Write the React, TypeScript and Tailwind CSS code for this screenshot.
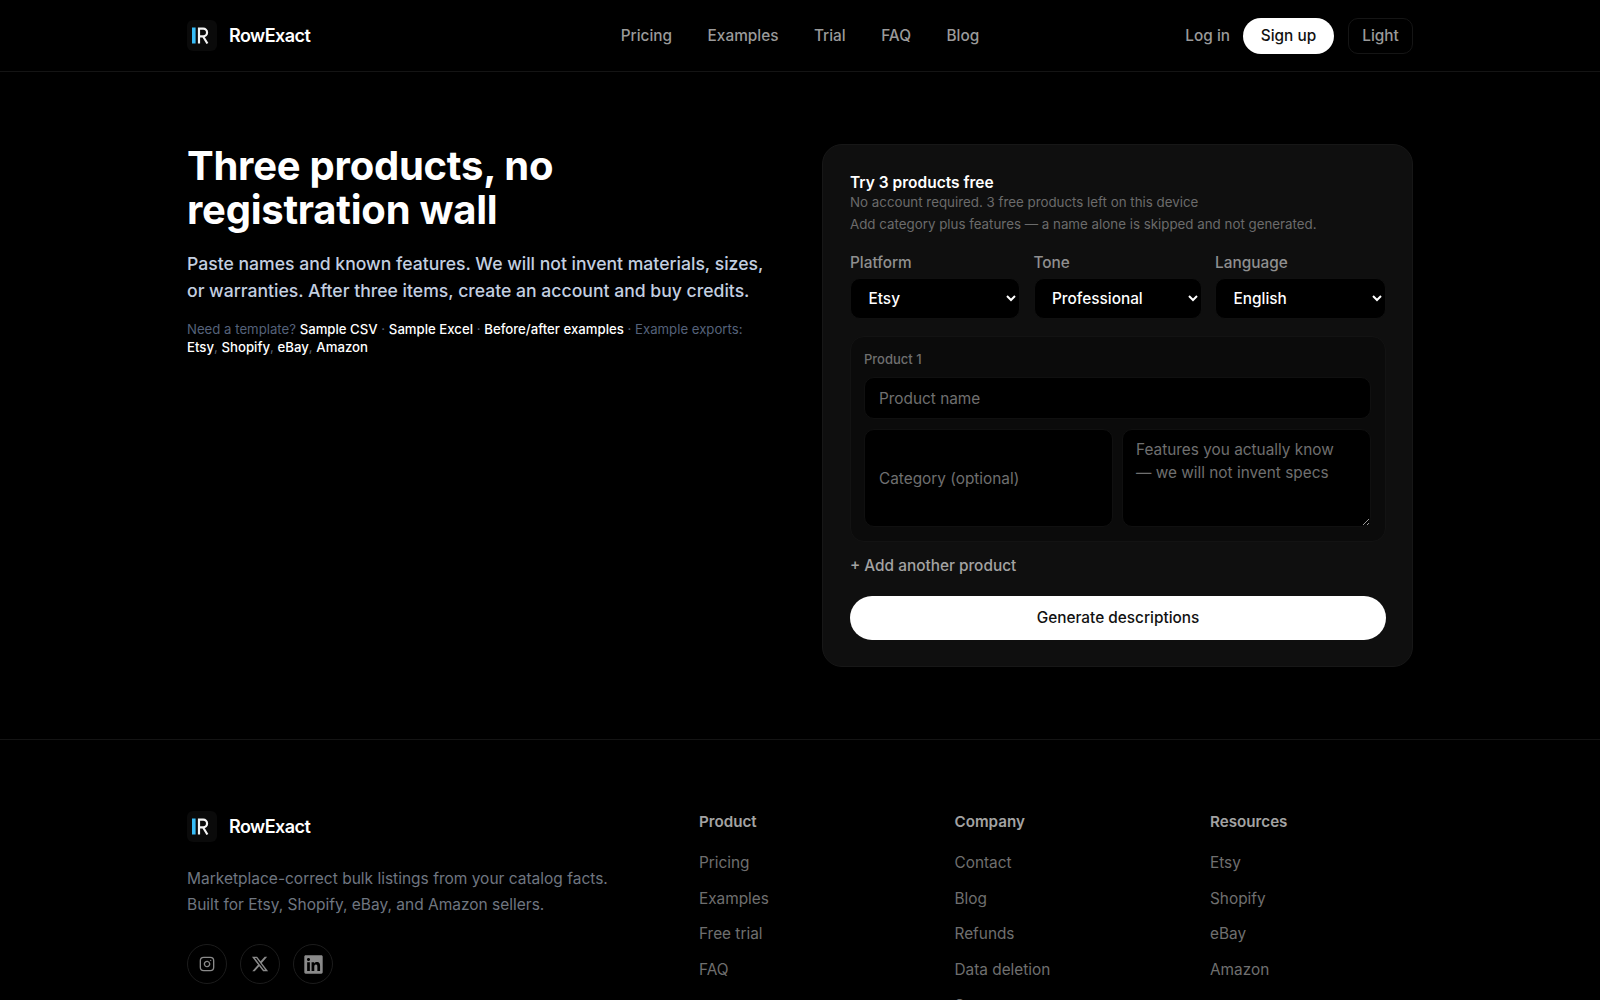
import { Instagram } from 'lucide-react'
import { FaLinkedin } from 'react-icons/fa'
import { FaXTwitter } from 'react-icons/fa6'

const navLinks = ['Pricing', 'Examples', 'Trial', 'FAQ', 'Blog']

const footerColumns = [
  { title: 'Product', links: ['Pricing', 'Examples', 'Free trial', 'FAQ'] },
  { title: 'Company', links: ['Contact', 'Blog', 'Refunds', 'Data deletion', 'Support'] },
  { title: 'Resources', links: ['Etsy', 'Shopify', 'eBay', 'Amazon'] },
]

function Logo() {
  return (
    <div className="flex items-center gap-3">
      <div className="flex h-[31px] w-[30px] items-center justify-center rounded-md bg-[#0a0a0a]">
        <svg width="30" height="31" viewBox="0 0 30 31" fill="none" aria-hidden>
          <rect x="5" y="7.5" width="3.6" height="16" fill="#38bdf8" />
          <path
            d="M12 23.5V8.6h4.2a3.8 3.8 0 0 1 0 7.7h-4.2M16 16.3l4.4 7.2"
            stroke="#f5f5f5"
            strokeWidth="2.2"
          />
        </svg>
      </div>
      <span className="text-lg font-semibold tracking-[-0.03em] text-white">RowExact</span>
    </div>
  )
}

function SelectField({ label, options }: { label: string; options: string[] }) {
  return (
    <label className="flex flex-col gap-1">
      <span className="text-[15.36px] leading-[22px] font-medium text-[#8f8f8f]">{label}</span>
      <select className="h-[41px] w-full rounded-[10px] border border-[#101010] bg-black pl-[13.5px] text-[15.36px] font-medium text-white [color-scheme:dark]">
        {options.map((o) => (
          <option key={o}>{o}</option>
        ))}
      </select>
    </label>
  )
}

export default function App() {
  return (
    <div className="h-[1000px] overflow-hidden bg-black font-['Inter',sans-serif] text-white">
      <header className="border-b border-[#141414]">
        <div className="mx-auto grid h-[71px] max-w-[1226px] grid-cols-[1fr_auto_1fr] items-center">
          <Logo />
          <nav className="flex items-center gap-[35.5px] text-[15.36px] font-medium text-[#9a9a9a]">
            {navLinks.map((l) => (
              <a key={l}>{l}</a>
            ))}
          </nav>
          <div className="flex items-center justify-end">
            <a className="text-[15.36px] font-medium text-[#9a9a9a]">Log in</a>
            <button className="ml-[13px] h-9 w-[91px] rounded-full bg-white text-[15.36px] font-medium text-[#111]">
              Sign up
            </button>
            <button className="ml-[14px] h-9 w-[65px] rounded-[10px] border border-[#151515] text-[15.36px] font-medium text-[#9a9a9a]">
              Light
            </button>
          </div>
        </div>
      </header>

      <main className="mx-auto grid max-w-[1226px] grid-cols-[1fr_591px] gap-[56px] py-[72px]">
        <section>
          <h1 className="text-[40px] leading-[44px] font-bold tracking-[-0.006em] text-white">
            Three products, no
            <br />
            registration wall
          </h1>
          <p className="mt-[18px] text-[17.6px] leading-[27px] font-medium text-[#c3cfe0]">
            Paste names and known features. We will not invent materials, sizes, or warranties. After three items,
            create an account and buy credits.
          </p>
          <p className="mt-[17px] text-[13.2px] leading-[17.5px] text-[#55627a]">
            Need a template? <a className="font-medium text-white">Sample CSV</a> · <a className="font-medium text-white">Sample Excel</a> ·{' '}
            <a className="font-medium text-white">Before/after examples</a> · Example exports:{' '}
            <a className="font-medium text-white">Etsy</a>, <a className="font-medium text-white">Shopify</a>,{' '}
            <a className="font-medium text-white">eBay</a>, <a className="font-medium text-white">Amazon</a>
          </p>
        </section>

        <section className="h-[523px] rounded-[20px] border border-[#171717] bg-[#0f0f0f] pt-[28px] pr-[26px] pl-[27px]">
          <h2 className="text-[15.5px] leading-5 font-semibold text-white">Try 3 products free</h2>
          <p className="text-[13.33px] leading-[19px] text-[#6b6b6b]">No account required. 3 free products left on this device</p>
          <p className="mt-[1px] text-[13.33px] leading-[22px] text-[#6b6b6b]">
            Add category plus features — a name alone is skipped and not generated.
          </p>

          <div className="mt-[17px] grid grid-cols-[170px_168px_1fr] gap-[13.5px]">
            <SelectField label="Platform" options={['Etsy', 'Shopify', 'eBay', 'Amazon']} />
            <SelectField label="Tone" options={['Professional', 'Friendly', 'Luxury']} />
            <SelectField label="Language" options={['English', 'Spanish', 'German']} />
          </div>

          <div className="mt-[17px] rounded-[14px] border border-[#131313] bg-[#0b0b0b] pt-[13px] pr-[14px] pb-[14px] pl-[13px]">
            <div className="text-[13px] leading-[18px] font-medium text-[#6f6f6f]">Product 1</div>
            <input
              placeholder="Product name"
              className="mt-[9px] h-[42px] w-full rounded-[10px] border border-[#101010] bg-black px-[14px] text-[15.36px] text-white outline-none placeholder:text-[#6f6f6f]"
            />
            <div className="mt-[10px] grid grid-cols-2 gap-[9px]">
              <input
                placeholder="Category (optional)"
                className="h-[98px] w-full rounded-[10px] border border-[#101010] bg-black px-[14px] text-[15.36px] text-white outline-none placeholder:text-[#6f6f6f]"
              />
              <textarea
                placeholder="Features you actually know — we will not invent specs"
                className="block h-[98px] w-full rounded-[10px] border border-[#101010] bg-black py-[9px] pr-[20px] pl-[13px] text-[15.36px] leading-[22.5px] text-white outline-none placeholder:text-[#6f6f6f]"
              />
            </div>
          </div>

          <button className="mt-[12px] block h-[24px] text-[15.36px] leading-6 font-medium text-[#a3a3a3]">+ Add another product</button>
          <button className="mt-[18px] h-[44px] w-full rounded-full bg-white text-[15.36px] font-medium text-[#111]">
            Generate descriptions
          </button>
        </section>
      </main>

      <footer className="border-t border-[#141414]">
        <div className="mx-auto grid max-w-[1226px] grid-cols-[512px_255.5px_255.5px_1fr] pt-[71px]">
          <div>
            <Logo />
            <p className="mt-[24px] text-[15.5px] leading-[25.6px] text-[#6f7680]">
              Marketplace-correct bulk listings from your catalog facts.
              <br />
              Built for Etsy, Shopify, eBay, and Amazon sellers.
            </p>
            <div className="mt-[27px] flex gap-[13px] text-[#8a8a8a]">
              <a className="flex h-10 w-10 items-center justify-center rounded-full border border-[#1c1c1c]">
                <Instagram size={16} />
              </a>
              <a className="flex h-10 w-10 items-center justify-center rounded-full border border-[#1c1c1c]">
                <FaXTwitter size={18} />
              </a>
              <a className="flex h-10 w-10 items-center justify-center rounded-full border border-[#1c1c1c]">
                <FaLinkedin size={21} />
              </a>
            </div>
          </div>
          {footerColumns.map((col) => (
            <div key={col.title}>
              <h3 className="text-[15.2px] leading-[22px] font-semibold text-[#a3a3a3]">{col.title}</h3>
              <ul className="mt-[18px] flex flex-col gap-[11.7px] text-[15.36px] leading-6 text-[#6f6f6f]">
                {col.links.map((l) => (
                  <li key={l}>{l}</li>
                ))}
              </ul>
            </div>
          ))}
        </div>
      </footer>
    </div>
  )
}
